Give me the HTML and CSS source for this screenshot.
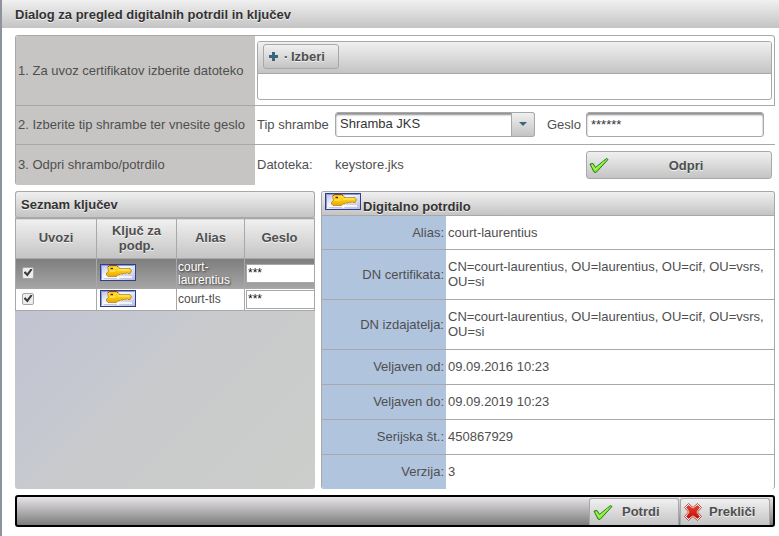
FILE: index.html
```html
<!DOCTYPE html>
<html lang="sl">
<head>
<meta charset="utf-8">
<meta name="viewport" content="width=device-width, initial-scale=1">
<title>Dialog za pregled digitalnih potrdil in ključev</title>
<link rel="stylesheet" href="styles.css">
</head>
<body>
<svg class="defs" aria-hidden="true">
  <defs>
    <linearGradient id="card" x1="0" y1="0" x2="1" y2="1">
      <stop offset="0" stop-color="#b9bce4"/><stop offset=".4" stop-color="#f4f5fc"/><stop offset="1" stop-color="#b4b9dc"/>
    </linearGradient>
    <linearGradient id="gold" x1="0" y1="0" x2="0" y2="1">
      <stop offset="0" stop-color="#ffe648"/><stop offset=".5" stop-color="#fccb10"/><stop offset="1" stop-color="#e8a800"/>
    </linearGradient>
    <linearGradient id="red" x1="0" y1="0" x2="0" y2="1">
      <stop offset="0" stop-color="#f0402c"/><stop offset="1" stop-color="#c40d00"/>
    </linearGradient>
    <symbol id="key" viewBox="0 0 36 17">
      <rect x=".5" y=".5" width="35" height="16" fill="url(#card)" stroke="#2c3f8c"/>
      <path d="M1.5 15.5V1.5h33" fill="none" stroke="#8f97cb"/>
      <path d="M4 13h28M18 11v4" stroke="#fff" stroke-width="1.5"/>
      <path d="M4 14.5h13M20 14.5h12" stroke="#c5c8df"/>
      <path d="M7.500 3 9 1.500h8L19 3.500V4.500h11l1.500 2L30 9.500h-2l-1-1-1.500 1.500L24 9l-1.500 1.500L21 9.500 19.500 11H18L16.500 12.500H8L6.500 11V9L8.500 7.500z" fill="url(#gold)" stroke="#8a5800" stroke-width=".5"/>
      <path d="M8 3 9.500 1.700h7l1.500 1" fill="none" stroke="#8a1c08" stroke-width=".8"/>
      <path d="M10.500 4.500h2.500" stroke="#4a3000" stroke-width="1.400"/>
      <path d="M18 6h11M9.500 7h6" stroke="#fff27c"/>
    </symbol>
    <symbol id="check" viewBox="0 0 20 18">
      <path d="M1 8 4 7.500 6.500 11.500 17.500 2.500 19 3.500 7 16.500 5 16z" fill="#86ee2e" stroke="#24752c" stroke-linejoin="round"/>
      <path d="M3 9 6 13.500 15 5.500" fill="none" stroke="#b0fa55"/>
    </symbol>
    <symbol id="cross" viewBox="0 0 18 18">
      <path d="M4.500.5 9 4.500 13.500.5 17.500 4.500 13.500 9 17.500 13.500 13.500 17.500 9 13.500 4.500 17.500.5 13.500 4.500 9 .5 4.500z" fill="#fff" stroke="#b3261c" stroke-width=".8" stroke-linejoin="round"/>
      <path d="M4.500 2.500 9 6 13.500 2.500 15.500 4.500 12 9 15.500 13.500 13.500 15.500 9 12 4.500 15.500 2.500 13.500 6 9 2.500 4.500z" fill="url(#red)" stroke="#a50d04" stroke-width=".6"/>
    </symbol>
  </defs>
</svg>
<main class="dialog">
  <header class="dialog-title"><h1>Dialog za pregled digitalnih potrdil in ključev</h1></header>
  <div class="dialog-body">
    <section class="steps">
      <div class="step step-upload">
        <div class="step-name">1. Za uvoz certifikatov izberite datoteko</div>
        <div class="step-main">
          <div class="upload">
            <div class="upload-bar">
              <button type="button" class="button choose">
                <svg width="9" height="9" viewBox="0 0 9 9" aria-hidden="true"><path d="M3 0h3v3h3v3H6v3H3V6H0V3h3z" fill="#38667f"/></svg>
                <span class="dot">·</span>Izberi
              </button>
            </div>
          </div>
        </div>
      </div>
      <div class="step step-type">
        <div class="step-name">2. Izberite tip shrambe ter vnesite geslo</div>
        <div class="step-main fields">
          <label for="store-type">Tip shrambe</label>
          <div class="select">
            <select id="store-type"><option>Shramba JKS</option></select>
            <span class="arrow"><svg width="8" height="4" viewBox="0 0 8 4" aria-hidden="true"><path d="M0 0h8L4 4z" fill="#38667f"/></svg></span>
          </div>
          <label for="store-pass">Geslo</label>
          <input class="password" id="store-pass" type="text" value="******">
        </div>
      </div>
      <div class="step step-open">
        <div class="step-name">3. Odpri shrambo/potrdilo</div>
        <div class="step-main fields">
          <span>Datoteka:</span>
          <span>keystore.jks</span>
          <button type="button" class="button open"><svg width="20" height="18" aria-hidden="true"><use href="#check"/></svg><span>Odpri</span></button>
        </div>
      </div>
    </section>
    <div class="panels">
      <section class="keys">
        <h2 class="keys-title">Seznam ključev</h2>
        <table class="keys-table">
          <colgroup><col class="col-import"><col class="col-sign"><col class="col-alias"><col></colgroup>
          <thead><tr><th>Uvozi</th><th>Ključ za podp.</th><th>Alias</th><th>Geslo</th></tr></thead>
          <tbody>
            <tr class="selected">
              <td><input type="checkbox" checked aria-label="Uvozi"></td>
              <td><svg class="key" width="36" height="17" aria-hidden="true"><use href="#key"/></svg></td>
              <td>court-laurentius</td>
              <td class="pass"><input type="text" value="***" aria-label="Geslo"></td>
            </tr>
            <tr>
              <td><input type="checkbox" checked aria-label="Uvozi"></td>
              <td><svg class="key" width="36" height="17" aria-hidden="true"><use href="#key"/></svg></td>
              <td>court-tls</td>
              <td class="pass"><input type="text" value="***" aria-label="Geslo"></td>
            </tr>
          </tbody>
        </table>
      </section>
      <section class="cert">
        <h2 class="cert-title"><svg width="36" height="17" aria-hidden="true"><use href="#key"/></svg><span>Digitalno potrdilo</span></h2>
        <table class="cert-table">
          <tbody>
            <tr class="short"><th scope="row">Alias:</th><td>court-laurentius</td></tr>
            <tr class="tall"><th scope="row">DN certifikata:</th><td>CN=court-laurentius, OU=laurentius, OU=cif, OU=vsrs, OU=si</td></tr>
            <tr class="tall"><th scope="row">DN izdajatelja:</th><td>CN=court-laurentius, OU=laurentius, OU=cif, OU=vsrs, OU=si</td></tr>
            <tr><th scope="row">Veljaven od:</th><td>09.09.2016 10:23</td></tr>
            <tr><th scope="row">Veljaven do:</th><td>09.09.2019 10:23</td></tr>
            <tr><th scope="row">Serijska št.:</th><td>450867929</td></tr>
            <tr class="short"><th scope="row">Verzija:</th><td>3</td></tr>
          </tbody>
        </table>
      </section>
    </div>
    <footer class="actions">
      <button type="button" class="button action"><svg width="20" height="18" aria-hidden="true"><use href="#check"/></svg>Potrdi</button>
      <button type="button" class="button action"><svg width="18" height="18" aria-hidden="true"><use href="#cross"/></svg>Prekliči</button>
    </footer>
  </div>
</main>
</body>
</html>
```
FILE: styles.css
```css
* { box-sizing: border-box; }

body {
  margin: 0;
  color: #4f4f4f;
  background: #fff;
  font: 13px/15px "Liberation Sans", Arial, sans-serif;
}

button, input, select { font: inherit; color: inherit; margin: 0; }

h1, h2 { margin: 0; font-size: 13px; line-height: 15px; color: #333; text-shadow: 0 1px 0 rgba(255, 255, 255, .7); }

svg { display: block; flex: none; }

.defs { position: absolute; width: 0; height: 0; }

.dialog { min-height: 100vh; border-left: 2px solid #8d939d; }

.dialog-title {
  height: 28px;
  padding: 7px 13px;
  background: linear-gradient(#f0f0f0, #c4c4c4);
}

.dialog-body { padding: 7px 4px 9px 13px; }

.button {
  display: flex;
  align-items: center;
  border: 1px solid #a8a8a8;
  border-radius: 3px;
  padding: 0;
  background: linear-gradient(#f0f0f0, #c4c4c4);
  font-weight: bold;
  text-shadow: 0 1px 0 rgba(255, 255, 255, .7);
}

/* numbered steps */
.steps { border-left: 1px solid #a8a8a8; border-radius: 3px; overflow: hidden; }

.step { display: flex; border-top: 1px solid #a8a8a8; }

.step-upload { height: 70px; border-right: 1px solid #a8a8a8; border-radius: 0 3px 0 0; }
.step-type { height: 39px; }
.step-open { height: 41px; }

.step-name {
  flex: 0 0 239px;
  display: flex;
  align-items: center;
  padding-left: 2px;
  background: #c6c5c3;
  white-space: nowrap;
}

.step-type .step-name, .step-open .step-name { padding-bottom: 2px; }

.step-main { flex: 1; min-width: 0; padding: 0 2px; }

.step-upload .step-main { padding-top: 5px; }

.upload { height: 59px; border: 1px solid #a8a8a8; border-radius: 3px; overflow: hidden; }

.upload-bar {
  height: 32px;
  padding: 2px 5px;
  border-bottom: 1px solid #a8a8a8;
  background: linear-gradient(#f0f0f0, #c4c4c4);
}

.choose { width: 76px; height: 25px; padding: 0 0 1px 5px; }

.dot { width: 7px; margin-left: 6px; text-align: left; }

.fields {
  display: grid;
  grid-template-columns: 78px 200px 12px 39px 1fr;
  align-items: center;
  padding: 0 3px 2px 2px;
}

.fields label[for="store-pass"] { grid-column: 4; }

.select { position: relative; }

.select select {
  display: block;
  width: 100%;
  height: 25px;
  padding: 0 4px 1px;
  appearance: none;
  border: 1px solid #a8a8a8;
  border-radius: 3px;
  background: #fff;
  box-shadow: inset 0 2px 2px #8f8f8f;
  color: #333;
}

.arrow {
  position: absolute;
  top: 0;
  right: 0;
  bottom: 0;
  width: 24px;
  display: grid;
  place-items: center;
  border: 1px solid #a8a8a8;
  border-radius: 0 3px 3px 0;
  background: linear-gradient(#f0f0f0, #c4c4c4);
  pointer-events: none;
}

.password {
  width: 178px;
  height: 25px;
  padding: 0 4px;
  border: 1px solid #a8a8a8;
  border-radius: 3px;
  box-shadow: inset 0 2px 2px #8f8f8f;
  color: #333;
}

.open { grid-column: 5; height: 28px; margin-top: 2px; padding: 0 2px; }
.open span { flex: 1; padding-right: 6px; }

/* key list and certificate */
.panels { display: flex; gap: 6px; margin-top: 6px; }

.keys {
  flex: 0 0 300px;
  border-radius: 3px;
  background: linear-gradient(135deg, #bfc0d2, #c5c8d0 45%, #c9cacc 55%, #cccecb);
}

.keys-title {
  height: 27px;
  padding: 5px;
  border: 1px solid #a8a8a8;
  border-radius: 3px;
  background: linear-gradient(#f0f0f0, #c4c4c4);
}

.keys-table { width: 100%; table-layout: fixed; border-collapse: collapse; }

.col-import { width: 81px; }
.col-sign { width: 80px; }
.col-alias { width: 68px; }

.keys-table th {
  height: 40px;
  padding: 0 10px 2px;
  border: 1px solid #a8a8a8;
  background: linear-gradient(#f0f0f0, #c4c4c4);
  text-shadow: 0 1px 0 rgba(255, 255, 255, .7);
}

.keys-table td {
  height: 22px;
  padding: 0 1px;
  border: 1px solid #a8a8a8;
  font-size: 12px;
  line-height: 13px;
}

.keys-table tbody tr { background: #fff; }

.keys-table .selected { background: linear-gradient(#7e7e7e, #a6a6a6); color: #fff; text-shadow: 1px 1px 2px #333; }
.keys-table .selected td { height: 30px; }

.keys-table input[type="checkbox"] {
  display: grid;
  place-items: center;
  width: 12px;
  height: 12px;
  margin: 0 0 2px 5px;
  appearance: none;
  border: 1px solid #a6a6a6;
  border-radius: 2px;
  background: #ededed;
}

.keys-table input[type="checkbox"]:checked::before {
  content: "";
  width: 9px;
  height: 8px;
  background: #3c3c3c;
  clip-path: polygon(0 50%, 22% 34%, 40% 60%, 82% 0, 100% 14%, 44% 100%);
}

.key { margin: 0 0 2px 2px; }

.keys-table .pass { padding: 0 0 1px 1px; overflow: hidden; }

.pass input {
  display: block;
  width: 80px;
  height: 19px;
  padding: 0 1px;
  border: 1px solid #a8a8a8;
  background: #fff;
  color: #111;
}

.cert { flex: 1; min-width: 0; border: 1px solid #a8a8a8; border-bottom: 0; border-radius: 3px; overflow: hidden; }

.cert-title {
  display: flex;
  gap: 2px;
  height: 23px;
  padding: 1px 3px;
  background: linear-gradient(#f0f0f0, #c4c4c4);
}

.cert-title span { padding-top: 6px; }

.cert-table { width: 100%; border-collapse: collapse; }

.cert-table th, .cert-table td { height: 35px; padding: 0 2px 1px; border-top: 1px solid #a8a8a8; }
.cert-table .short th, .cert-table .short td { height: 34px; }
.cert-table .tall th, .cert-table .tall td { height: 50px; }

.cert-table th {
  width: 124px;
  background: #b0c4de;
  font-weight: normal;
  text-align: right;
}

/* dialog buttons */
.actions {
  display: flex;
  justify-content: flex-end;
  gap: 1px;
  height: 32px;
  margin-top: 6px;
  padding: 1px 3px 0 0;
  border: 2px solid #000;
  border-radius: 3px;
  background: linear-gradient(#e8e4e8, #7c7c7c);
}

.action { width: 90px; padding: 0 3px; gap: 9px; border-bottom: 0; border-radius: 3px 3px 0 0; }
.action + .action { gap: 7px; }
```
